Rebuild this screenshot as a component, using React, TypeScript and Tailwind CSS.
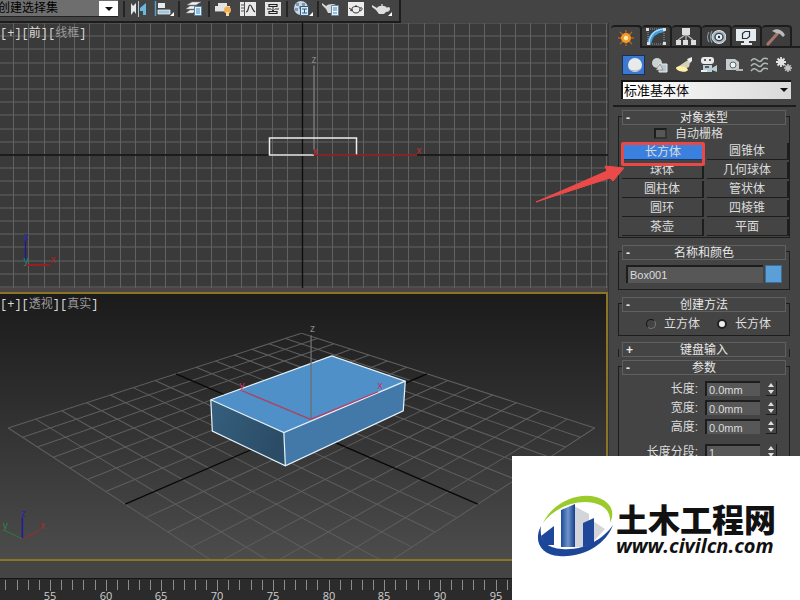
import { useState, type ReactNode } from "react";

const shapes = ["长方体", "圆锥体", "球体", "几何球体", "圆柱体", "管状体", "圆环", "四棱锥", "茶壶", "平面"];

// ground plane: s runs left to right, t runs from the back to the viewer
const project = (s: number, t: number) => {
  const w = 1 - 0.337 * t;
  return { x: 302 + (291 * s) / w, y: 427 + (125.7 * t) / w };
};

const groundLines = Array.from({ length: 15 }, (_, i) => i - 7).flatMap((i) => {
  const a = i / 7;
  return [
    { key: `a${i}`, main: i === 0, from: project((a - 1) / 2, (a + 1) / 2), to: project((a + 1) / 2, (a - 1) / 2) },
    { key: `b${i}`, main: i === 0, from: project((-a - 1) / 2, (a - 1) / 2), to: project((-a + 1) / 2, (a + 1) / 2) },
  ];
});

const Icon = ({ children, w = 18, h = 18 }: { children: ReactNode; w?: number; h?: number }) => (
  <svg width={w} height={h} viewBox={`0 0 ${w} ${h}`} fill="none" aria-hidden="true" className="shrink-0">
    {children}
  </svg>
);

const ToolButton = ({ label, children }: { label: string; children: ReactNode }) => (
  <button aria-label={label} className="flex h-[18px] shrink-0 items-center justify-center">
    {children}
  </button>
);

const Separator = () => <div className="h-4 w-[2px] shrink-0 bg-[#242424]" />;

const Corner = () => <path d="M20 12v4h-4z" fill="#fff" />;

const Toolbar = () => (
  <div className="flex h-[23px] w-[401px] max-w-full shrink-0 items-start border-r-2 border-b-2 border-[#1c1c1c] bg-[#444]">
    <div className="relative h-[17px] w-[118px] shrink-0 overflow-hidden border-b border-[#222] bg-[#6e6e6e]">
      <select
        aria-label="选择集"
        className="-ml-[2px] block h-[17px] w-[118px] appearance-none bg-transparent text-xs leading-[17px] text-black outline-none"
      >
        <option>创建选择集</option>
      </select>
      <svg className="pointer-events-none absolute top-0 right-0" width="19" height="16" aria-hidden="true">
        <path d="M0 1h19v15H0z" fill="#fff" />
        <path d="M6 7h8l-4 4z" fill="#111" />
      </svg>
    </div>
    <div className="flex flex-1 items-center pl-[5px]">
      <Separator />
      <div className="flex w-[53px] justify-around">
        <ToolButton label="镜像">
          <Icon>
            <path d="M2 3v12l3-4 2 3V3L4 6z" fill="#e4e8ea" />
            <path d="M9.500 1v16" stroke="#a9c8da" strokeWidth="1" />
            <path d="M17 3v12h-3v-4h-3V8z" fill="#6bb8df" />
          </Icon>
        </ToolButton>
        <ToolButton label="对齐">
          <Icon w={20}>
            <path d="M1.500 1v15" stroke="#5d9cc4" strokeWidth="1.500" />
            <path d="M4 3h7v5H4z" fill="#e9ecee" />
            <path d="M4 10h12v4H4z" fill="#9fc6dc" stroke="#fff" strokeWidth=".7" />
            <Corner />
          </Icon>
        </ToolButton>
      </div>
      <Separator />
      <div className="flex w-7 justify-center">
        <ToolButton label="层管理器">
          <Icon>
            <path d="m2 5 5-3h9l-5 3zM1 9l4-3h8l-3 3zM1 13l4-3h6l-3 3z" fill="#f1f1f1" stroke="#888" strokeWidth=".5" />
            <path d="M9.500 6.500h7v9h-7z" fill="#e9f3fa" stroke="#4b85ad" />
            <path d="M11 9h4M11 11h4M11 13h4" stroke="#4b85ad" />
          </Icon>
        </ToolButton>
      </div>
      <Separator />
      <div className="flex w-[76px] items-center justify-around">
        <ToolButton label="石墨工具">
          <Icon>
            <path d="M4 3h9v4H4zM1 6h15v5H1z" fill="#e3e3e3" />
            <path d="M1 11h10v1H1z" fill="#888" />
            <circle cx="13.500" cy="10" r="3.500" fill="#f0b052" />
            <path d="M12 12h3v4h-3z" fill="#f6d9a0" />
          </Icon>
        </ToolButton>
        <ToolButton label="曲线编辑器">
          <Icon>
            <path d="M1 2h16v14H1z" fill="#e9e9e9" />
            <path d="M5.500 2v14M2 5h3M2 8h3M2 11h3" stroke="#555" />
            <path d="M7 12c3 0 2-7 4-7s2 5 5 7" stroke="#333" strokeWidth="1.200" />
          </Icon>
        </ToolButton>
        <ToolButton label="图解视图">
          <Icon>
            <path d="M1 2h16v14H1z" fill="#e4e4e4" />
            <path d="M5 4.500h8v2H5zM5 11.500h8v2H5z" stroke="#222" strokeWidth="1.200" />
            <path d="M3 9h4M11 9h4M9 7v4M7.500 9.500 9 11l1.500-1.500" stroke="#333" />
          </Icon>
        </ToolButton>
      </div>
      <Separator />
      <div className="flex w-[29px] justify-center">
        <ToolButton label="材质编辑器">
          <Icon w={20}>
            <circle cx="8" cy="8" r="7" fill="#c8d7e3" />
            <path d="M3 3h3v3H3zM9 3h3v3H9zM2 8h3v3H2zM6 6h3v3H6z" fill="#7d9ab4" />
            <path d="M7.500 6.500h8v9h-8z" fill="#dbe8f2" stroke="#315d84" />
            <path d="M9 9h5M9 13h5M11.500 9v4" stroke="#315d84" />
            <Corner />
          </Icon>
        </ToolButton>
      </div>
      <Separator />
      <div className="flex w-[76px] items-center justify-around">
        <ToolButton label="渲染设置">
          <Icon>
            <path d="m0 3 4 3c2-2 7-3 10-1l-2 8H6L4 9 0 5z" fill="#d7d7d7" />
            <path d="M9.500 5.500h7v10h-7z" fill="#e9f3fa" stroke="#6789a5" />
            <path d="M11 8h4M11 10h4M11 13h4" stroke="#4b85ad" />
          </Icon>
        </ToolButton>
        <ToolButton label="渲染帧窗口">
          <Icon>
            <path d="M1 2h16v14H1z" fill="#ececec" />
            <path d="M5 8c1-2 7-2 8 0 0 3-1 5-4 5s-4-2-4-5zM5 10 2 8M5 11l-2-1M13 8c3-1 3 2 0 3M8 6h2" stroke="#333" />
          </Icon>
        </ToolButton>
        <ToolButton label="渲染产品">
          <Icon w={20}>
            <path d="m0 5 5 3c1-3 9-3 10 0 1-2 3-1 3 1s-2 3-4 3l-2 2H7L4 10 0 7z" fill="#dedede" />
            <path d="M9 4h2v2H9z" fill="#aaa" />
            <Corner />
          </Icon>
        </ToolButton>
      </div>
    </div>
  </div>
);

const ViewLabel = ({ view, mode, bright }: { view: string; mode: string; bright?: boolean }) => (
  <div className="absolute top-[3px] left-0 font-['Liberation_Mono','Noto_Sans_CJK_SC',monospace] text-xs leading-4 whitespace-nowrap text-[#d8d8d8]">
    [+][<span className={bright ? "text-[#ddd]" : "text-[#9a9a9a]"}>{view}</span>][
    <span className="text-[#9a9a9a]">{mode}</span>]
  </div>
);

const FrontView = () => (
  <div className="relative min-h-0 flex-1 overflow-hidden bg-[#3a3a3a]">
    <svg className="block h-full w-full" viewBox="0 23 608 266" preserveAspectRatio="xMidYMid slice" aria-label="前视图">
      <g stroke="#626262" strokeWidth="1">
        {Array.from({ length: 41 }, (_, i) => Math.round((i - 20) * 15.2 + 302) + 0.5).map((x) => (
          <path key={x} d={`M${x} 20V292`} />
        ))}
        {Array.from({ length: 21 }, (_, i) => Math.round((i - 10) * 13.2 + 155) + 0.5).map((y) => (
          <path key={y} d={`M0 ${y}H608`} />
        ))}
      </g>
      <path d="M302.500 20V292M0 155.500H608" stroke="#0c0c0c" strokeWidth="1.300" />
      <path d="M314 66V150" stroke="#777" strokeWidth="1.500" />
      <path d="M314 155.500H269.500V138.500H356.500V155.500" stroke="#eee" strokeWidth="1.500" fill="none" />
      <path d="M314 155.500H417" stroke="#a32a2a" strokeWidth="1.500" />
      <path d="M25.500 241V265" stroke="#1c1c98" strokeWidth="1.500" />
      <path d="M26 265.500H50" stroke="#951f23" strokeWidth="2" />
      <g fontFamily="Liberation Sans, sans-serif" fontSize="10" textAnchor="middle">
        <text x="314" y="63" fill="#888">z</text>
        <text x="315" y="155" fill="#c03030">x</text>
        <text x="419" y="154" fill="#c03030">x</text>
        <text x="26" y="240" fill="#2626c0">z</text>
        <text x="26" y="264" fill="#1b9a55">y</text>
        <text x="53" y="263" fill="#b02020">x</text>
      </g>
    </svg>
    <ViewLabel view="前" mode="线框" bright />
  </div>
);

const PerspectiveView = () => (
  <div className="relative min-h-0 flex-1 overflow-hidden border-y-2 border-r-2 border-[#8a7428] bg-linear-to-b from-[#1b1b1b] to-[#4c4c4c]">
    <svg className="block h-full w-full" viewBox="0 294 607 263" preserveAspectRatio="xMidYMid slice" aria-label="透视图">
      {groundLines
        .filter((line) => !line.main)
        .map(({ key, from, to }) => (
          <path key={key} d={`M${from.x} ${from.y}L${to.x} ${to.y}`} stroke="#5e5e5e" strokeWidth="1" />
        ))}
      {groundLines
        .filter((line) => line.main)
        .map(({ key, from, to }) => (
          <path key={key} d={`M${from.x} ${from.y}L${to.x} ${to.y}`} stroke="#080808" strokeWidth="1.300" />
        ))}
      <defs>
        <linearGradient id="side" x1="0" y1="0" x2="1" y2="0.400">
          <stop offset="0" stopColor="#35607f" />
          <stop offset="1" stopColor="#2b4c66" />
        </linearGradient>
      </defs>
      <path d="M212 399 332 355.500 405 380.500 284.500 431.500z" fill="#4e90c7" />
      <path d="M212 399 284.500 431.500 286 464.500 213.500 430z" fill="url(#side)" />
      <path d="M284.500 431.500 405 380.500 403 410 286 464.500z" fill="#4279a8" />
      <path
        d="M212 399 332 355.500 405 380.500 403 410 286 464.500 213.500 430zL284.500 431.500 405 380.500M284.500 431.500 286 464.500"
        stroke="#e6f2fa"
        strokeWidth="1.200"
        fill="none"
      />
      <path d="M311.500 335V418" stroke="#6d6f73" strokeWidth="1.300" />
      <path d="M243 390 311 418.500" stroke="#b0405c" strokeWidth="1.300" />
      <path d="M311 418.500 378 391" stroke="#c33a60" strokeWidth="1.300" />
      <path d="M25 516V537" stroke="#1d1d9c" strokeWidth="1.500" />
      <path d="M25 537 8 529" stroke="#2c7a3c" />
      <path d="M25 537 42 529" stroke="#a02b2b" />
      <g fontFamily="Liberation Sans, sans-serif" fontSize="10" textAnchor="middle">
        <text x="313" y="332" fill="#888">z</text>
        <text x="243" y="388" fill="#d02c64">y</text>
        <text x="380" y="388" fill="#d02c64">x</text>
        <text x="26" y="515" fill="#2525b8">z</text>
        <text x="8" y="527" fill="#2b8a3c">y</text>
        <text x="45" y="527" fill="#b02727">x</text>
      </g>
    </svg>
    <ViewLabel view="透视" mode="真实" />
  </div>
);

const TimeRuler = () => (
  <div className="mt-[17px] h-[22px] shrink-0 overflow-hidden border-t border-[#161616] bg-[#2b2b2b]">
    <svg width="608" height="21" className="block" aria-label="时间轴">
      {Array.from({ length: 55 }, (_, i) => {
        const x = Math.round(50 + (i - 4) * 11.14) + 0.5;
        return <path key={i} d={`M${x} 1V${(i - 4) % 5 === 0 ? 12 : 11}`} stroke="#8d8d8d" />;
      })}
      <g fill="#d0d0d0" fontFamily="Open Sans, sans-serif" fontSize="11" textAnchor="middle">
        {Array.from({ length: 10 }, (_, i) => (
          <text key={i} x={50 + Math.round(i * 55.7)} y="21">
            {55 + i * 5}
          </text>
        ))}
      </g>
    </svg>
  </div>
);

const tabs = [
  {
    label: "创建",
    icon: (
      <>
        <path d="M10 2v16M2 10h16M4 4l12 12M16 4 4 16" stroke="#b5651b" strokeWidth="1.300" />
        <circle cx="10" cy="10" r="5" fill="#f29b2c" />
        <circle cx="10" cy="10" r="2.200" fill="#ffe9a8" />
      </>
    ),
  },
  {
    label: "修改",
    icon: (
      <>
        <path d="M2 2h16v15H2z" stroke="#9a9a9a" strokeDasharray="1 1" />
        <path d="M3 17C4 9 9 4 18 3" stroke="#3f9fe0" strokeWidth="4" />
        <path d="M3 16C4 8 9 3 17 2" stroke="#c5e7fb" strokeWidth="1.200" />
        <path d="M0 1h3v3H0zM17 1h3v3h-3zM1 15h3v3H1zM17 15h3v3h-3z" fill="#ddd" />
      </>
    ),
  },
  {
    label: "层次",
    icon: (
      <>
        <path d="M6 1h8v7H6zM0 13h5v5H0zM7 13h5v5H7zM15 13h5v5h-5z" fill="#dedede" />
        <path d="M10 8v5M9 8l-7 5M11 8l6 5" stroke="#bbb" strokeWidth="1.200" />
      </>
    ),
  },
  {
    label: "运动",
    icon: (
      <>
        <path d="M3 5q-3 5 0 10M6 4q-3 6 0 12" stroke="#8195a5" strokeWidth="1.200" />
        <ellipse cx="13" cy="10" rx="7" ry="6.500" fill="#a9b6bf" stroke="#dfe5e8" />
        <ellipse cx="13" cy="10" rx="4" ry="3.600" fill="#eef1f3" stroke="#2f4456" strokeWidth="1.400" />
        <circle cx="13" cy="10" r="1.200" fill="#25323e" />
      </>
    ),
  },
  {
    label: "显示",
    icon: (
      <>
        <path d="M0 2h20v12H0zM8 14h5v2H8zM5 16h11v2H5z" fill="#e6ebef" />
        <path d="M6.500 6.500 9 4.500h4.500v5L11 11.500H6.500z" stroke="#26313c" strokeWidth="1.200" />
      </>
    ),
  },
  {
    label: "实用程序",
    icon: (
      <>
        <path d="m2 17 9-10" stroke="#a67468" strokeWidth="3.200" strokeLinecap="round" />
        <path d="M6 4c4-3 8-2 11 1l2 3-2 2-3-3-4-1z" fill="#b9bcbc" />
      </>
    ),
  },
];

const categories = [
  {
    label: "几何体",
    icon: (
      <>
        <circle cx="10" cy="9" r="7" fill="#e9eaec" />
        <path d="M4 13c4 4 10 3 12-1-3 3-8 3-12 1" fill="#aab0ba" />
      </>
    ),
  },
  {
    label: "图形",
    icon: (
      <>
        <circle cx="7" cy="7" r="5" fill="#ccd1d3" />
        <path d="M9 8h8v8H9z" fill="#b9c6cc" stroke="#e7ebed" />
        <path d="m6 14 4-6 3 6z" fill="#d8dcde" stroke="#777" strokeWidth=".6" />
      </>
    ),
  },
  {
    label: "灯光",
    icon: (
      <>
        <path d="m16 2-2 9-9 4-4-3z" fill="#d7d1b8" />
        <ellipse cx="7" cy="13" rx="6" ry="2.500" transform="rotate(10 7 13)" fill="#fff1a6" />
        <path d="m12 3 5-2v4l-2 2z" fill="#eee" />
      </>
    ),
  },
  {
    label: "摄影机",
    icon: (
      <>
        <rect x="1" y="1" width="13" height="7" rx="3" fill="#e9e9e9" />
        <path d="M3 9h9v7H3zM12 12l5-3v7l-5-2z" fill="#b9cdd4" />
        <path d="M4 4h2M9 4h2M5 11h4" stroke="#333" strokeWidth="1.300" />
        <path d="M1 15h6" stroke="#eee" strokeWidth="2" />
      </>
    ),
  },
  {
    label: "辅助对象",
    icon: (
      <>
        <path d="M1 3h9l4 3v8H1z" fill="#c6cbd0" />
        <circle cx="8" cy="9" r="3" fill="#f1f1f1" stroke="#566" />
        <path d="M11 13h7v2h-7z" fill="#b5b5b5" />
      </>
    ),
  },
  {
    label: "空间扭曲",
    icon: (
      <path
        d="M1 5q3-4 6-1t5 0 6-1M1 10q3-4 6-1t5 0 6-1M1 15q3-4 6-1t5 0 6-1"
        stroke="#b2b8b6"
        strokeWidth="1.500"
      />
    ),
  },
  {
    label: "系统",
    icon: (
      <>
        <path d="M6 1v10M1 6h10M2.500 2.500l7 7M9.500 2.500l-7 7" stroke="#e2e2e2" strokeWidth="1.800" />
        <circle cx="6" cy="6" r="3.200" fill="#e2e2e2" />
        <path d="M13 8v8M9 12h8M10.200 9.200l5.600 5.600M15.800 9.200l-5.600 5.600" stroke="#c4c4c4" strokeWidth="1.500" />
        <circle cx="13" cy="12" r="2.500" fill="#c4c4c4" />
      </>
    ),
  },
];

const Rollout = ({ title, children }: { title: string; children?: ReactNode }) => (
  <section className={children ? "border border-[#1d1d1d]" : "border-x border-[#1d1d1d]"}>
    <h2 className="relative mx-[3px] -mt-[7px] flex h-[15px] items-center justify-center border border-[#606060] bg-[#444] text-xs leading-none text-[#e8e8e8]">
      <button aria-label={title} className="absolute inset-y-0 left-[3px] font-bold leading-[12px]">
        {children ? "-" : "+"}
      </button>
      {title}
    </h2>
    {children}
  </section>
);

const Spinner = ({ label, value }: { label: string; value: string }) => (
  <div className="flex h-[15px] items-center">
    <label htmlFor={label} className="w-[79px] text-right text-xs leading-none">
      {label}:
    </label>
    <input
      id={label}
      defaultValue={value}
      className="ml-[7px] h-[15px] w-[55px] border-t-2 border-l-2 border-[#1d1d1d] bg-[#575757] pl-[2px] text-[11px] leading-[13px] outline-none"
    />
    <div className="ml-[6px] flex h-[15px] w-[11px] flex-col border-r border-b border-[#1d1d1d]">
      <button aria-label={`${label} +`} className="flex flex-1 items-center justify-center">
        <svg width="6" height="4" aria-hidden="true"><path d="M0 4h6L3 0z" fill="#ddd" /></svg>
      </button>
      <button aria-label={`${label} -`} className="flex flex-1 items-center justify-center">
        <svg width="6" height="4" aria-hidden="true"><path d="M0 0h6L3 4z" fill="#ddd" /></svg>
      </button>
    </div>
  </div>
);

const radioClass =
  "h-[10px] w-[10px] appearance-none rounded-full border border-[#151515] border-r-[#777] border-b-[#777] bg-[#444] checked:border-2 checked:border-[#222] checked:bg-[#eee]";

const CommandPanel = () => {
  const [shape, setShape] = useState("长方体");

  return (
    <aside className="relative z-10 w-[191px] shrink-0 bg-[#444] pt-[25px] text-[#dcdcdc]">
      <div className="flex h-[23px] pl-[2px]">
        {tabs.map((tab, i) => (
          <button
            key={tab.label}
            aria-label={tab.label}
            className={
              i === 0
                ? "flex w-[31px] items-center justify-center rounded-t border-t-2 border-r-2 border-[#1d1d1d]"
                : "flex w-[30px] items-center justify-center rounded-t border-t-2 border-r-2 border-b-2 border-[#1d1d1d] bg-[#3d3d3d]"
            }
          >
            <Icon w={20} h={20}>{tab.icon}</Icon>
          </button>
        ))}
        <div className="flex-1 border-b-2 border-[#1d1d1d]" />
      </div>

      <div className="mt-[7px] flex justify-between pr-[5px] pl-[13px]">
        {categories.map((category, i) => (
          <button
            key={category.label}
            aria-label={category.label}
            className={
              i === 0
                ? "flex h-5 w-[23px] items-center justify-center border border-[#1b2f55] bg-[#3c78cf]"
                : "flex h-5 w-[23px] items-center justify-center"
            }
          >
            <Icon>{category.icon}</Icon>
          </button>
        ))}
      </div>

      <div className="relative mt-[5px] mr-[9px] ml-3 h-[19px] border-t-2 border-l-2 border-[#151515] bg-linear-to-r from-white to-[#d9d9d9]">
        <select
          aria-label="基本体类别"
          className="block h-[17px] w-full appearance-none bg-transparent pl-px text-[13px] leading-[17px] text-black outline-none"
        >
          <option>标准基本体</option>
        </select>
        <svg className="pointer-events-none absolute top-[6px] right-[3px]" width="8" height="5" aria-hidden="true">
          <path d="M0 0h8L4 4z" fill="#111" />
        </svg>
      </div>

      <div className="mt-[6px] mr-1 ml-1 border-t-2 border-[#1d1d1d]" />

      <div className="mr-[10px] ml-[9px] flex flex-col gap-[13px] pt-[9px]">
        <Rollout title="对象类型">
          <div className="flex h-[17px] items-center pl-[35px]">
            <input
              id="autogrid"
              type="checkbox"
              className="h-[11px] w-[13px] appearance-none border-2 border-[#1d1d1d] border-r-[#333] border-b-[#333] bg-[#575757]"
            />
            <label htmlFor="autogrid" className="ml-2 text-xs leading-none">
              自动栅格
            </label>
          </div>
          <div className="grid grid-cols-2 gap-x-[3px] gap-y-[2px] pt-px pb-px pl-[3px]">
            {shapes.map((name) => (
              <div key={name} className="relative flex">
                <button
                  onClick={() => setShape(name)}
                  className={
                    shape === name
                      ? "h-[17px] w-full border border-[#17376f] bg-[#3a80df] text-xs leading-[17px]"
                      : "h-[17px] w-full border-r-2 border-b border-[#1d1d1d] text-xs leading-[17px]"
                  }
                >
                  {name}
                </button>
                {name === "长方体" && (
                  <>
                    <div className="pointer-events-none absolute -inset-x-px -top-px z-10 h-6 rounded-xs border-3 border-[#e84848]" />
                    <svg
                      className="pointer-events-none absolute top-[22px] -left-[87px] z-10"
                      width="90"
                      height="40"
                      aria-hidden="true"
                    >
                      <path d="M1 37 72 6 70 1 89 3 78 16 75 13z" fill="#ec4a49" stroke="#ec4a49" strokeLinejoin="round" />
                    </svg>
                  </>
                )}
              </div>
            ))}
          </div>
        </Rollout>

        <Rollout title="名称和颜色">
          <div className="flex items-center justify-between px-[7px] pt-[5px] pb-[6px]">
            <input
              aria-label="名称"
              defaultValue="Box001"
              className="h-[18px] w-[137px] border-t-2 border-l-2 border-[#1d1d1d] bg-[#575757] pl-[2px] text-[11px] outline-none"
            />
            <button aria-label="颜色" className="h-[18px] w-[17px] border border-[#396f98] bg-[#5b9fd8]" />
          </div>
        </Rollout>

        <Rollout title="创建方法">
          <div className="flex h-[23px] items-center pl-[27px] text-xs leading-none">
            <input id="cube" type="radio" name="method" className={radioClass} />
            <label htmlFor="cube" className="ml-2">立方体</label>
            <input id="box" type="radio" name="method" defaultChecked className={`${radioClass} ml-[17px]`} />
            <label htmlFor="box" className="ml-2">长方体</label>
          </div>
        </Rollout>

        <Rollout title="键盘输入" />

        <div className="-mt-1">
          <Rollout title="参数">
            <div className="flex flex-col gap-1 pt-[6px] pb-1">
              <Spinner label="长度" value="0.0mm" />
              <Spinner label="宽度" value="0.0mm" />
              <Spinner label="高度" value="0.0mm" />
              <div className="mt-[6px]">
                <Spinner label="长度分段" value="1" />
              </div>
            </div>
          </Rollout>
        </div>
      </div>
    </aside>
  );
};

const SiteLogo = () => (
  <a
    href="#"
    className="absolute right-0 bottom-0 z-20 flex h-36 w-72 items-center bg-white pl-6 text-[#111]"
  >
    <svg width="80" height="66" viewBox="0 0 80 66" aria-hidden="true" className="shrink-0">
      <defs>
        <linearGradient id="tower" x1="0" x2="1">
          <stop offset="0" stopColor="#1e489a" />
          <stop offset=".5" stopColor="#6e96cb" />
          <stop offset="1" stopColor="#173d8c" />
        </linearGradient>
      </defs>
      <path d="m38 11 15 8v33H38zM57 26l12 8-12 13z" fill="#d3d5da" />
      <path d="M25 15 39 9v43H25z" fill="url(#tower)" />
      <path d="m47 28 11-5v25l-11 4z" fill="#1f479a" />
      <path d="m5 41 13-10v19H9z" fill="#1e469a" />
      <path d="M7 28C17 7 42-3 60 2c14 4 20 14 14 26 1-10-4-17-16-20C40 4 18 13 7 28z" fill="#9acb2b" />
      <path d="M5 31c-8 15 0 29 18 30 25 2 47-12 54-31-10 15-31 26-51 24C10 53 3 45 5 31z" fill="#1c4698" />
    </svg>
    <div className="mt-1 whitespace-nowrap">
      <div className="font-['Noto_Sans_CJK_SC',sans-serif] text-[32px] leading-8 font-black">土木工程网</div>
      <div className="font-['Open_Sans',sans-serif] text-[20px] leading-6 font-bold italic">www.civilcn.com</div>
    </div>
  </a>
);

const App = () => {
  return (
    <div className="relative flex h-screen overflow-hidden bg-[#444] font-['Liberation_Sans','Noto_Sans_CJK_SC',sans-serif]">
      <main className="flex min-w-0 flex-1 flex-col">
        <Toolbar />
        <div className="flex min-h-0 flex-1 flex-col gap-1 border-r border-[#333] bg-[#4a4444]">
          <FrontView />
          <PerspectiveView />
        </div>
        <TimeRuler />
      </main>
      <CommandPanel />
      <SiteLogo />
    </div>
  );
};

export default App;
